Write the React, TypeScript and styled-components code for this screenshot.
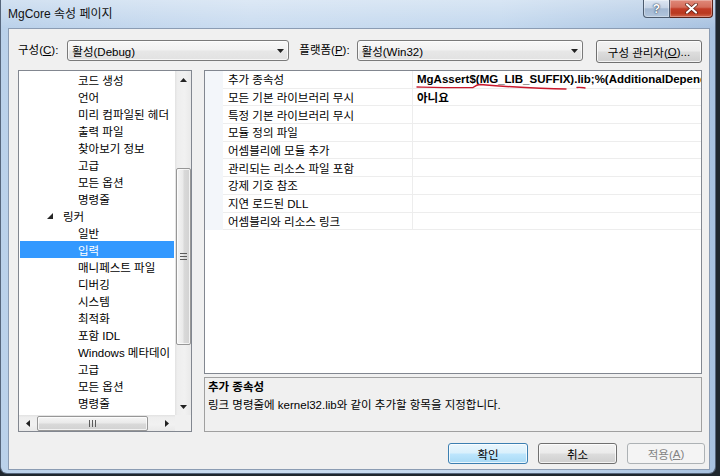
import React from 'react';
import styled, { createGlobalStyle } from 'styled-components';

const GlobalStyle = createGlobalStyle`
  html, body {
    margin: 0;
    padding: 0;
    background: #1f272e;
  }
  body {
    width: 720px;
    height: 476px;
    overflow: hidden;
    font-family: "Liberation Sans", "Noto Sans CJK KR", sans-serif;
    font-size: 11.5px;
    color: #000;
  }
`;

const Window = styled.div`
  width: 716px;
  height: 474px;
  box-sizing: border-box;
  display: flex;
  flex-direction: column;
  padding: 0 5px 3px 7px;
  border: 1px solid #56667c;
  border-top: none;
  border-radius: 0 0 7px 7px;
  background:
    linear-gradient(180deg, rgba(255, 255, 255, 0.35) 0px, rgba(255, 255, 255, 0) 28px),
    linear-gradient(90deg, #bad1ea 0%, #cadcf0 35%, #c3d8ee 70%, #a8c2e0 100%);
`;

const TitleBar = styled.div`
  height: 28px;
  flex: none;
  display: flex;
  align-items: flex-start;
`;

const Title = styled.div`
  padding: 6px 0 0 0;
  font-size: 12px;
  line-height: 16px;
  color: #111;
`;

const CaptionButtons = styled.div`
  margin-left: auto;
  margin-right: -3px;
  display: flex;
`;

const HelpButton = styled.div`
  width: 27px;
  height: 18px;
  box-sizing: border-box;
  display: flex;
  align-items: center;
  justify-content: center;
  border: 1px solid #4c5b6e;
  border-top: none;
  border-radius: 0 0 0 4px;
  background: linear-gradient(180deg, #dde7f3 0%, #c6d4e6 45%, #a3b8d2 52%, #b1c5dc 100%);
  box-shadow: inset 0 0 0 1px rgba(255, 255, 255, 0.35);
  color: #fff;
  font-weight: bold;
  font-size: 12px;
  text-shadow: 0 0 2px #2a3a50, 0 0 1px #2a3a50;
`;

const CloseButton = styled.div`
  width: 43px;
  height: 18px;
  box-sizing: border-box;
  display: flex;
  align-items: center;
  justify-content: center;
  border: 1px solid #5a2219;
  border-top: none;
  border-left: none;
  border-radius: 0 0 4px 0;
  background: linear-gradient(180deg, #e0897a 0%, #d46e5c 42%, #c23c27 52%, #b9391f 78%, #d2664d 100%);
  box-shadow: inset 0 0 0 1px rgba(255, 255, 255, 0.3);
`;

const Client = styled.div`
  flex: 1;
  min-height: 0;
  display: flex;
  flex-direction: column;
  border: 1px solid #8b9cb3;
  background: #f0f0f0;
  padding: 11px 7px 5px 9px;
`;

const TopRow = styled.div`
  height: 23px;
  flex: none;
  display: flex;
  align-items: flex-start;
`;

const Label = styled.div<{ $gap: number }>`
  margin-top: 3px;
  margin-right: ${p => p.$gap}px;
  line-height: 15px;
  white-space: nowrap;
`;

const Combo = styled.div<{ $width: number }>`
  width: ${p => p.$width}px;
  height: 21px;
  box-sizing: border-box;
  border: 1px solid #7a7a7a;
  border-radius: 3px;
  background: linear-gradient(180deg, #f8f8f8 0%, #f1f1f1 48%, #e7e7e7 52%, #e2e2e2 100%);
  box-shadow: inset 0 0 0 1px rgba(255, 255, 255, 0.7);
  display: flex;
  align-items: center;
  padding: 0 4px 0 4px;
  margin-right: 10px;
`;

const ComboText = styled.span`
  flex: 1;
`;

const ManagerSlot = styled.div`
  margin-left: auto;
`;

const Button = styled.div<{ $variant?: 'default' | 'disabled'; $width: number; $height: number }>`
  width: ${p => p.$width}px;
  height: ${p => p.$height}px;
  box-sizing: border-box;
  display: flex;
  align-items: center;
  justify-content: center;
  border-radius: 3px;
  border: 1px solid
    ${p => (p.$variant === 'default' ? '#3c7fb1' : p.$variant === 'disabled' ? '#adb2b5' : '#707070')};
  background: ${p =>
    p.$variant === 'default'
      ? 'linear-gradient(180deg, #eaf6fd 0%, #d9f0fc 49%, #bee6fd 51%, #a7d9f5 100%)'
      : p.$variant === 'disabled'
      ? '#f4f4f4'
      : 'linear-gradient(180deg, #f2f2f2 0%, #ebebeb 49%, #dddddd 51%, #cfcfcf 100%)'};
  box-shadow: ${p => (p.$variant === 'disabled' ? 'none' : 'inset 0 0 0 1px rgba(255, 255, 255, 0.75)')};
  color: ${p => (p.$variant === 'disabled' ? '#838383' : '#000')};
  white-space: nowrap;
`;

const Main = styled.div`
  flex: 1;
  margin-top: 7px;
  display: flex;
  gap: 12px;
  min-height: 0;
`;

const Tree = styled.div`
  width: 174px;
  flex: none;
  box-sizing: border-box;
  border: 1px solid #828790;
  background: #fff;
  display: grid;
  grid-template-columns: minmax(0, 1fr) 16px;
  grid-template-rows: minmax(0, 1fr) 16px;
`;

const TreeBody = styled.div`
  overflow: hidden;
  min-height: 0;
`;

const TreeRow = styled.div<{ $level: number; $selected?: boolean }>`
  height: 17px;
  margin: 0 1px;
  display: flex;
  align-items: center;
  white-space: nowrap;
  padding-left: ${p => (p.$level === 1 ? 27 : 58)}px;
  background: ${p => (p.$selected ? '#3399ff' : 'transparent')};
  color: ${p => (p.$selected ? '#fff' : '#000')};
`;

const Expander = styled.span`
  width: 16px;
  display: inline-flex;
  align-items: center;
`;

const VScroll = styled.div`
  display: flex;
  flex-direction: column;
  min-height: 0;
  background: linear-gradient(90deg, #e2e2e2 0%, #eeeeee 15%, #f1f1f1 60%, #e9e9e9 100%);
`;

const HScroll = styled.div`
  display: flex;
  background: linear-gradient(180deg, #e2e2e2 0%, #eeeeee 15%, #f1f1f1 60%, #e9e9e9 100%);
`;

const Corner = styled.div`
  background: #f0f0f0;
`;

const Arrow = styled.div<{ $horizontal?: boolean }>`
  flex: none;
  width: ${p => (p.$horizontal ? 17 : 16)}px;
  height: ${p => (p.$horizontal ? 16 : 17)}px;
  display: flex;
  align-items: center;
  justify-content: center;
`;

const Track = styled.div`
  flex: 1;
  display: flex;
  min-width: 0;
  min-height: 0;
`;

const Thumb = styled.div<{ $horizontal?: boolean; $offset: number; $length: number }>`
  box-sizing: border-box;
  flex: none;
  display: flex;
  align-items: center;
  justify-content: center;
  border: 1px solid #979797;
  border-radius: 2px;
  ${p =>
    p.$horizontal
      ? `
    margin-left: ${p.$offset}px;
    width: ${p.$length}px;
    height: 15px;
    margin-top: 1px;
    background: linear-gradient(180deg, #f5f5f5 0%, #eaeaea 45%, #d9d9d9 55%, #d2d2d2 100%);
  `
      : `
    margin-top: ${p.$offset}px;
    height: ${p.$length}px;
    width: 15px;
    margin-left: 1px;
    background: linear-gradient(90deg, #f5f5f5 0%, #eaeaea 45%, #d9d9d9 55%, #d2d2d2 100%);
  `}
  box-shadow: inset 0 0 0 1px rgba(255, 255, 255, 0.7);
`;

const RightPane = styled.div`
  flex: 1;
  display: flex;
  flex-direction: column;
  gap: 3px;
  min-width: 0;
  min-height: 0;
`;

const Grid = styled.div`
  flex: 1;
  min-height: 0;
  border: 1px solid #828790;
  background: #fff;
  position: relative;
  overflow: hidden;
`;

const GridRow = styled.div`
  height: 17.7px;
  box-sizing: border-box;
  display: grid;
  grid-template-columns: 18px 190px minmax(0, 1fr);
`;

const Gutter = styled.div`
  background: #f3f6fa;
`;

const NameCell = styled.div`
  padding-left: 5px;
  display: flex;
  align-items: center;
  white-space: nowrap;
  border-bottom: 1px solid #ededed;
  border-right: 1px solid #ededed;
`;

const ValueCell = styled.div`
  padding-left: 4px;
  display: flex;
  align-items: center;
  white-space: nowrap;
  overflow: hidden;
  font-weight: bold;
  font-size: 11.5px;
  border-bottom: 1px solid #ededed;
`;

const Squiggle = styled.svg`
  position: absolute;
  left: 0;
  top: 0;
  pointer-events: none;
`;

const Description = styled.div`
  height: 55px;
  flex: none;
  box-sizing: border-box;
  border: 1px solid #a0a0a0;
  background: #f0f0f0;
  padding: 0 3px;
  line-height: 18px;
`;

const DescTitle = styled.div`
  font-weight: bold;
`;

const BottomRow = styled.div`
  flex: none;
  margin-top: 11px;
  margin-right: -3px;
  display: flex;
  justify-content: flex-end;
  gap: 10px;
`;

const Triangle = ({ dir }: { dir: 'up' | 'down' | 'left' | 'right' }) => {
  const pts = {
    up: '0,4 7,4 3.5,0',
    down: '0,0 7,0 3.5,4',
    left: '4,0 4,7 0,3.5',
    right: '0,0 0,7 4,3.5',
  }[dir];
  const vertical = dir === 'up' || dir === 'down';
  return (
    <svg width={vertical ? 7 : 4} height={vertical ? 4 : 7}>
      <polygon points={pts} fill="#222" />
    </svg>
  );
};

const Grip = ({ horizontal }: { horizontal?: boolean }) =>
  horizontal ? (
    <svg width="7" height="7">
      <path d="M0.5 0 V7 M3.5 0 V7 M6.5 0 V7" stroke="#5c5c5c" strokeWidth="1" />
    </svg>
  ) : (
    <svg width="7" height="7">
      <path d="M0 0.5 H7 M0 3.5 H7 M0 6.5 H7" stroke="#5c5c5c" strokeWidth="1" />
    </svg>
  );

type TreeItem = { label: string; level: number; selected?: boolean; expander?: 'open' | 'closed' };

const treeItems: TreeItem[] = [
  { label: '코드 생성', level: 2 },
  { label: '언어', level: 2 },
  { label: '미리 컴파일된 헤더', level: 2 },
  { label: '출력 파일', level: 2 },
  { label: '찾아보기 정보', level: 2 },
  { label: '고급', level: 2 },
  { label: '모든 옵션', level: 2 },
  { label: '명령줄', level: 2 },
  { label: '링커', level: 1, expander: 'open' },
  { label: '일반', level: 2 },
  { label: '입력', level: 2, selected: true },
  { label: '매니페스트 파일', level: 2 },
  { label: '디버깅', level: 2 },
  { label: '시스템', level: 2 },
  { label: '최적화', level: 2 },
  { label: '포함 IDL', level: 2 },
  { label: 'Windows 메타데이', level: 2 },
  { label: '고급', level: 2 },
  { label: '모든 옵션', level: 2 },
  { label: '명령줄', level: 2 },
  { label: '매니페스트 도구', level: 1, expander: 'closed' },
];

const properties = [
  { name: '추가 종속성', value: 'MgAssert$(MG_LIB_SUFFIX).lib;%(AdditionalDependencies)' },
  { name: '모든 기본 라이브러리 무시', value: '아니요' },
  { name: '특정 기본 라이브러리 무시', value: '' },
  { name: '모듈 정의 파일', value: '' },
  { name: '어셈블리에 모듈 추가', value: '' },
  { name: '관리되는 리소스 파일 포함', value: '' },
  { name: '강제 기호 참조', value: '' },
  { name: '지연 로드된 DLL', value: '' },
  { name: '어셈블리와 리소스 링크', value: '' },
];

export default function App() {
  return (
    <>
      <GlobalStyle />
      <Window>
        <TitleBar>
          <Title>MgCore 속성 페이지</Title>
          <CaptionButtons>
            <HelpButton>?</HelpButton>
            <CloseButton>
              <svg width="13" height="11" viewBox="0 0 13 11">
                <path d="M2 1.5 L11 9.5 M11 1.5 L2 9.5" stroke="#5a1e14" strokeWidth="3.6" strokeLinecap="round" />
                <path d="M2 1.5 L11 9.5 M11 1.5 L2 9.5" stroke="#ffffff" strokeWidth="2.2" strokeLinecap="round" />
              </svg>
            </CloseButton>
          </CaptionButtons>
        </TitleBar>

        <Client>
          <TopRow>
            <Label $gap={9}>
              구성(<u>C</u>):
            </Label>
            <Combo $width={222}>
              <ComboText>활성(Debug)</ComboText>
              <Triangle dir="down" />
            </Combo>
            <Label $gap={7}>
              플랫폼(<u>P</u>):
            </Label>
            <Combo $width={226}>
              <ComboText>활성(Win32)</ComboText>
              <Triangle dir="down" />
            </Combo>
            <ManagerSlot>
              <Button $width={106} $height={23}>
                구성 관리자(<u>O</u>)...
              </Button>
            </ManagerSlot>
          </TopRow>

          <Main>
            <Tree>
              <TreeBody>
                {treeItems.map((item, i) => (
                  <TreeRow key={i} $level={item.level} $selected={item.selected}>
                    {item.expander && (
                      <Expander>
                        {item.expander === 'open' ? (
                          <svg width="6" height="6">
                            <polygon points="6,0 6,6 0,6" fill="#262626" />
                          </svg>
                        ) : (
                          <svg width="5" height="8">
                            <polygon points="0.5,0.5 0.5,7.5 4.5,4" fill="none" stroke="#777" />
                          </svg>
                        )}
                      </Expander>
                    )}
                    {item.label}
                  </TreeRow>
                ))}
              </TreeBody>
              <VScroll>
                <Arrow>
                  <Triangle dir="up" />
                </Arrow>
                <Track>
                  <Thumb $offset={80} $length={177}>
                    <Grip />
                  </Thumb>
                </Track>
                <Arrow>
                  <Triangle dir="down" />
                </Arrow>
              </VScroll>
              <HScroll>
                <Arrow $horizontal>
                  <Triangle dir="left" />
                </Arrow>
                <Track>
                  <Thumb $horizontal $offset={1} $length={111}>
                    <Grip horizontal />
                  </Thumb>
                </Track>
                <Arrow $horizontal>
                  <Triangle dir="right" />
                </Arrow>
              </HScroll>
              <Corner />
            </Tree>

            <RightPane>
              <Grid>
                {properties.map((p, i) => (
                  <GridRow key={i}>
                    <Gutter />
                    <NameCell>{p.name}</NameCell>
                    <ValueCell>{p.value}</ValueCell>
                  </GridRow>
                ))}
                <Squiggle width="400" height="30">
                  <path
                    d="M212 16 C235 16.5 255 17 268 16.5 C270 15 272 13.5 275 13.5 C300 15.5 335 18 361 18"
                    fill="none"
                    stroke="#c8182c"
                    strokeWidth="1.4"
                    strokeLinecap="round"
                  />
                  <path d="M372 16.5 C375 16 377 16.5 380 17" fill="none" stroke="#c8182c" strokeWidth="1.4" strokeLinecap="round" />
                </Squiggle>
              </Grid>
              <Description>
                <DescTitle>추가 종속성</DescTitle>
                <div>링크 명령줄에 kernel32.lib와 같이 추가할 항목을 지정합니다.</div>
              </Description>
            </RightPane>
          </Main>

          <BottomRow>
            <Button $variant="default" $width={80} $height={21}>
              확인
            </Button>
            <Button $width={79} $height={21}>
              취소
            </Button>
            <Button $variant="disabled" $width={78} $height={21}>
              적용(<u>A</u>)
            </Button>
          </BottomRow>
        </Client>
      </Window>
    </>
  );
}
